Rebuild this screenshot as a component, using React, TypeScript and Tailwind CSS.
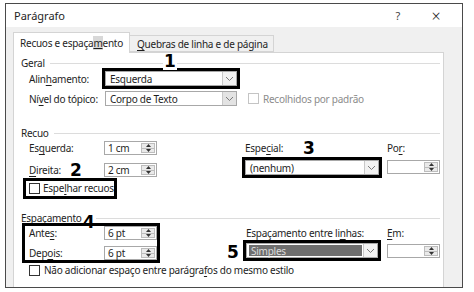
import { ReactNode } from 'react'

const U = ({ children }: { children: ReactNode }) => <span className="underline underline-offset-[2px]">{children}</span>

function Chevron() {
  return (
    <svg width="9" height="6" viewBox="0 0 9 6" className="text-[#7a7a7a]">
      <path d="M1 1 L4.5 4.5 L8 1" fill="none" stroke="currentColor" strokeWidth="1" />
    </svg>
  )
}

function Dropdown({ value, w, dark, gray }: { value: string; w: string; dark?: boolean; gray?: boolean }) {
  return (
    <div className={`flex h-[15px] border border-[#a8a8a8] bg-white ${w}`}>
      <div className="flex-1 flex items-center pl-[2px] pr-[1px] py-[1px]">
        <span className={`flex-1 h-full flex items-center pl-[2px] ${dark ? 'bg-[#6e6e6e] text-[#dcdcdc]' : ''}`}>{value}</span>
      </div>
      <div className={`w-[14px] flex items-center justify-center border-l border-[#c8c8c8] ${gray ? 'bg-[#e3e3e3]' : 'bg-[#f2f2f2]'}`}>
        <Chevron />
      </div>
    </div>
  )
}

function Spin({ value }: { value: string }) {
  return (
    <div className="flex h-[14px] w-[53px] border border-[#a8a8a8] bg-white">
      <div className="flex-1 flex items-center pl-[3px]">{value}</div>
      <div className="w-[14px] my-[1px] mr-[1px] flex flex-col border border-[#bdbdbd] bg-[#eaeaea]">
        <div className="flex-1 flex items-center justify-center border-b border-[#bdbdbd]">
          <svg width="5" height="3" viewBox="0 0 5 3"><path d="M0 3 L2.5 0 L5 3 Z" fill="#333" /></svg>
        </div>
        <div className="flex-1 flex items-center justify-center">
          <svg width="5" height="3" viewBox="0 0 5 3"><path d="M0 0 L2.5 3 L5 0 Z" fill="#333" /></svg>
        </div>
      </div>
    </div>
  )
}

function Check({ disabled }: { disabled?: boolean }) {
  return <div className={`w-[11px] h-[11px] shrink-0 border bg-white ${disabled ? 'border-[#c4c4c4]' : 'border-[#333]'}`} />
}

function Heading({ children, h }: { children: ReactNode; h?: string }) {
  return (
    <div className={`flex items-center gap-[5px] h-[14px] ${h ?? ''}`}>
      <span>{children}</span>
      <div className="flex-1 h-px bg-[#dcdcdc]" />
    </div>
  )
}

const Num = ({ n, cls }: { n: string; cls: string }) => (
  <span className={`absolute font-['DejaVu_Sans',sans-serif] font-bold text-[17px] leading-none tracking-normal text-black ${cls}`}>{n}</span>
)

const Box = ({ cls }: { cls: string }) => (
  <div className={`absolute border-[3px] border-black pointer-events-none ${cls}`} />
)

export default function App() {
  return (
    <div className="w-[474px] h-[292px] bg-white pl-[5px] pt-[3px] font-['Noto_Sans',sans-serif] text-[10px] tracking-[-0.25px] text-[#1e1e1e] leading-none whitespace-nowrap">
      <div className="w-[458px] h-[285px] border border-[#4a4a4a] bg-[#f0f0f0] flex flex-col">
        {/* title bar */}
        <div className="h-[23px] bg-white flex items-center pl-[8px] text-[11px] tracking-normal">
          <span className="flex-1">Parágrafo</span>
          <span className="w-[40px] text-center text-[#444]">?</span>
          <span className="w-[36px] text-center text-[16px] font-light mr-[8px]">×</span>
        </div>

        <div className="flex-1 flex flex-col pl-[7px] pr-[18px] pt-[5px]">
          {/* tabs */}
          <div className="flex items-end h-[20px] relative z-10">
            <div className="h-[21px] -mb-px w-[117px] bg-white border border-b-0 border-[#d4d4d4] flex items-center justify-center">
              <span>Recuos e espaça<span className="underline bg-[#d8d8d8]">m</span>ento</span>
            </div>
            <div className="h-[17px] w-[144px] border border-l-0 border-[#d4d4d4] flex items-center pl-[7px]">
              <span><U>Q</U>uebras de linha e de página</span>
            </div>
          </div>

          {/* panel */}
          <div className="flex-1 bg-white border border-b-0 border-[#d4d4d4] pl-[7px] pr-[3px] pt-[3px] relative">
            <Heading>Geral</Heading>
            <div className="pl-[8px]">
              <div className="flex items-center h-[15px] mt-[1px]">
                <span className="w-[76px]">Alin<U>h</U>amento:</span>
                <div className="relative">
                  <Dropdown value="Esquerda" w="w-[132px]" />
                  <Box cls="-inset-[3px]" />
                  <Num n="1" cls="left-[58px] -top-[18px] bg-white px-[1px]" />
                </div>
              </div>
              <div className="flex items-center h-[15px] mt-[5px]">
                <span className="w-[76px]">Ní<U>v</U>el do tópico:</span>
                <Dropdown value="Corpo de Texto" w="w-[132px]" gray />
                <div className="flex items-center ml-[11px] gap-[4px] text-[#8c8c8c]">
                  <Check disabled />
                  <span>Recolhidos por padrão</span>
                </div>
              </div>
            </div>

            <Heading h="mt-[20px]">Recuo</Heading>
            <div className="flex pl-[8px] mt-[1px]">
              <div className="w-[219px]">
                <div className="flex items-center h-[14px]">
                  <span className="w-[75px]">Es<U>q</U>uerda:</span>
                  <Spin value="1 cm" />
                </div>
                <div className="flex items-center h-[14px] mt-[8px] relative">
                  <span className="w-[75px]"><U>D</U>ireita:</span>
                  <Spin value="2 cm" />
                  <Num n="2" cls="left-[41px] top-[-1px]" />
                </div>
                <div className="flex items-center gap-[3px] h-[12px] mt-[5px] relative w-[83px]">
                  <Check />
                  <span>Espe<U>l</U>har recuos</span>
                  <Box cls="-left-[6px] -right-[5px] -top-[4px] -bottom-[5px]" />
                </div>
              </div>
              <div className="flex gap-[8px]">
                <div className="relative">
                  <div className="h-[14px] flex items-center"><span>Espe<U>c</U>ial:</span></div>
                  <Num n="3" cls="left-[58px] top-[-1px]" />
                  <div className="relative mt-[5px]">
                    <Dropdown value="(nenhum)" w="w-[134px]" />
                    <Box cls="-inset-[3px]" />
                  </div>
                </div>
                <div>
                  <div className="h-[14px] flex items-center"><span>Po<U>r</U>:</span></div>
                  <div className="mt-[5px]"><Spin value="" /></div>
                </div>
              </div>
            </div>

            <div className="relative">
              <Heading h="mt-[17px]">Espaçamento</Heading>
              <Num n="4" cls="left-[62px] top-[3px] bg-white pr-[1px]" />
            </div>
            <div className="flex pl-[8px] mt-[1px]">
              <div className="w-[219px]">
                <div className="relative w-[128px]">
                  <div className="flex items-center h-[14px]">
                    <span className="w-[75px]">Ante<U>s</U>:</span>
                    <Spin value="6 pt" />
                  </div>
                  <div className="flex items-center h-[14px] mt-[6px]">
                    <span className="w-[75px]">Dep<U>o</U>is:</span>
                    <Spin value="6 pt" />
                  </div>
                  <Box cls="-left-[7px] -right-[3px] -top-[3px] -bottom-[3px]" />
                </div>
              </div>
              <div className="flex gap-[8px]">
                <div className="relative">
                  <div className="h-[14px] flex items-center"><span>Espaçamento entre li<U>n</U>has:</span></div>
                  <div className="relative mt-[3px]">
                    <Dropdown value="Simples" w="w-[132px]" dark />
                    <Box cls="-inset-[3px]" />
                    <Num n="5" cls="-left-[19px] top-[1px]" />
                  </div>
                </div>
                <div className="ml-[1px]">
                  <div className="h-[14px] flex items-center"><span><U>E</U>m:</span></div>
                  <div className="mt-[4px]"><Spin value="" /></div>
                </div>
              </div>
            </div>
            <div className="flex items-center gap-[4px] h-[12px] mt-[4px] pl-[8px]">
              <Check />
              <span>Não adicionar espaço entre parágra<U>f</U>os do mesmo estilo</span>
            </div>
          </div>
        </div>
      </div>
    </div>
  )
}
